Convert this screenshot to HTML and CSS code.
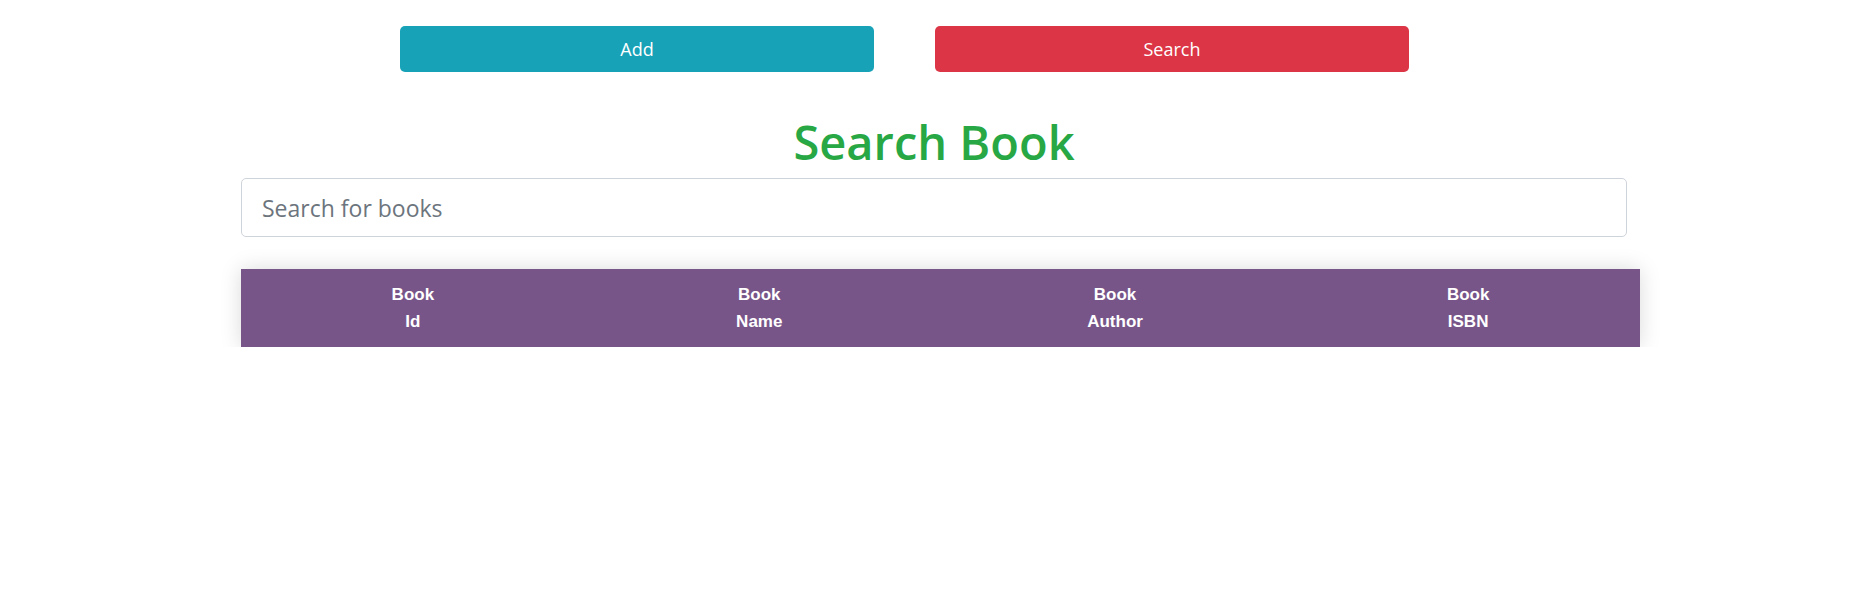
FILE: index.html
```html
<!DOCTYPE html>
<html>
<head>
<meta charset="utf-8">
<link rel="stylesheet" href="styles.css">
</head>
<body>
<div class="actions">
  <button class="btn btn-info">Add</button>
  <button class="btn btn-danger">Search</button>
</div>
<div class="content">
  <h1 class="title">Search Book</h1>
  <input class="search" type="text" placeholder="Search for books">
  <table class="books">
    <thead>
      <tr>
        <th><span class="wrap">Book Id</span></th>
        <th><span class="wrap">Book Name</span></th>
        <th><span class="wrap">Book Author</span></th>
        <th><span class="wrap">Book ISBN</span></th>
      </tr>
    </thead>
  </table>
</div>
</body>
</html>
```
FILE: styles.css
```css
html, body {
  margin: 0;
  padding: 0;
  background: #fff;
}
body {
  font-family: "Open Sans", "Noto Sans", sans-serif;
  width: 1873px;
}
.actions {
  display: flex;
  gap: 61px;
  padding: 26px 0 0 400px;
}
.btn {
  width: 474px;
  height: 46px;
  border: none;
  border-radius: 5px;
  color: #fff;
  font-family: "Open Sans", "Noto Sans", sans-serif;
  font-size: 18px;
  cursor: pointer;
}
.btn-info { background: #17a2b8; }
.btn-danger { background: #dc3545; }
.content {
  padding-left: 241px;
  display: flex;
  flex-direction: column;
}
.title {
  margin: 41px 0 0 0;
  width: 1386px;
  text-align: center;
  color: #28a745;
  font-weight: 600;
  font-size: 47px;
  line-height: 58px;
}
.search {
  box-sizing: border-box;
  width: 1386px;
  height: 59px;
  margin-top: 7px;
  padding: 0 20px;
  border: 1px solid #ced4da;
  border-radius: 5px;
  font-family: "Open Sans", "Noto Sans", sans-serif;
  font-size: 23px;
  color: #495057;
}
.search::placeholder {
  color: #6c757d;
}
.books {
  margin-top: 32px;
  width: 1399px;
  border-collapse: collapse;
  box-shadow: 0 0 20px rgba(0, 0, 0, 0.15);
}
.books th {
  height: 78px;
  padding: 0 100px;
  background: #775589;
  color: #fff;
  font-family: "Liberation Sans", Arial, sans-serif;
  font-weight: bold;
  font-size: 17px;
  line-height: 27px;
  text-align: center;
  vertical-align: middle;
}
.wrap {
  display: inline-block;
  width: min-content;
}
```
